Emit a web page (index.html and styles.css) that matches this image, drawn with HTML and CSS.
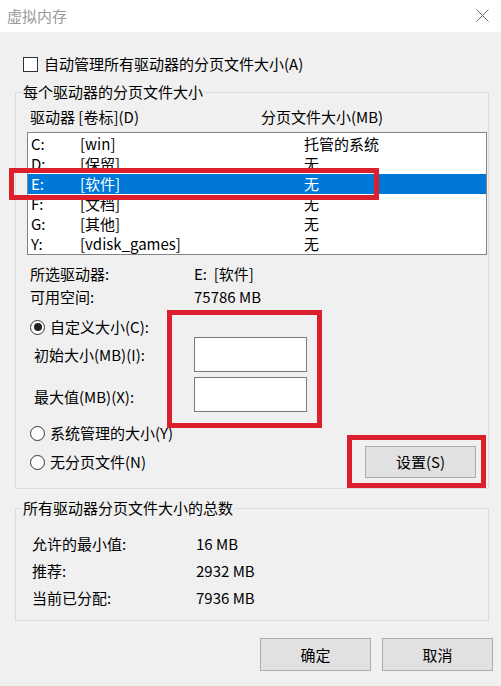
FILE: index.html
```html
<!DOCTYPE html>
<html lang="zh-CN">
<head>
<meta charset="utf-8">
<title>虚拟内存</title>
<link rel="stylesheet" href="styles.css">
</head>
<body>
<div class="window">
  <div class="titlebar">
    <span class="title">虚拟内存</span>
    <svg class="close" width="13" height="13" viewBox="0 0 13 13"><path d="M0.5 0.5 L12.5 12.5 M12.5 0.5 L0.5 12.5" stroke="#707070" stroke-width="1" fill="none"/></svg>
  </div>
  <div class="content">
    <div class="auto"><span class="checkbox"></span><span>自动管理所有驱动器的分页文件大小(A)</span></div>

    <fieldset class="group">
      <legend>每个驱动器的分页文件大小</legend>
      <div class="group-body drives">
        <div class="list-head"><span class="col-drive">驱动器 [卷标](D)</span><span>分页文件大小(MB)</span></div>
        <div class="list">
          <div class="row"><span class="c-letter">C:</span><span class="c-label">[win]</span><span>托管的系统</span></div>
          <div class="row"><span class="c-letter">D:</span><span class="c-label">[保留]</span><span>无</span></div>
          <div class="row selected"><span class="c-letter">E:</span><span class="c-label">[软件]</span><span>无</span></div>
          <div class="row"><span class="c-letter">F:</span><span class="c-label">[文档]</span><span>无</span></div>
          <div class="row"><span class="c-letter">G:</span><span class="c-label">[其他]</span><span>无</span></div>
          <div class="row"><span class="c-letter">Y:</span><span class="c-label">[vdisk_games]</span><span>无</span></div>
        </div>
        <div class="info">
          <div class="info-row"><span class="info-label">所选驱动器:</span><span>E:&nbsp;&nbsp;[软件]</span></div>
          <div class="info-row"><span class="info-label">可用空间:</span><span>75786 MB</span></div>
        </div>
        <div class="radio-row custom"><span class="radio checked"></span><span>自定义大小(C):</span></div>
        <div class="size-row"><span class="size-label">初始大小(MB)(I):</span><span class="input"></span></div>
        <div class="size-row second"><span class="size-label lower">最大值(MB)(X):</span><span class="input"></span></div>
        <div class="radio-row system"><span class="radio"></span><span>系统管理的大小(Y)</span></div>
        <div class="radio-row last"><span class="radio"></span><span>无分页文件(N)</span><span class="btn set-btn">设置(S)</span></div>
      </div>
    </fieldset>

    <fieldset class="group totals">
      <legend>所有驱动器分页文件大小的总数</legend>
      <div class="group-body totals-body">
        <div class="total-row"><span class="total-label">允许的最小值:</span><span>16 MB</span></div>
        <div class="total-row"><span class="total-label">推荐:</span><span>2932 MB</span></div>
        <div class="total-row"><span class="total-label">当前已分配:</span><span>7936 MB</span></div>
      </div>
    </fieldset>

    <div class="actions">
      <span class="btn">确定</span>
      <span class="btn">取消</span>
    </div>
  </div>

  <div class="mark mark-row"></div>
  <div class="mark mark-inputs"></div>
  <div class="mark mark-set"></div>
</div>
</body>
</html>
```

FILE: styles.css
```css
* { box-sizing: border-box; }

html, body {
  margin: 0;
  padding: 0;
  background: #f0f0f0;
}

.window {
  position: relative;
  width: 501px;
  height: 686px;
  font-family: "Noto Sans CJK SC", "Noto Sans", sans-serif;
  font-size: 15px;
  line-height: 20px;
  color: #000;
  background: #f0f0f0;
  overflow: hidden;
}

.titlebar {
  height: 32px;
  background: #fff;
  display: flex;
  align-items: center;
  justify-content: space-between;
  padding: 0 12px 0 7px;
}

.title {
  color: #9a9a9a;
  font-size: 15px;
}

.close {
  display: block;
  margin-top: -1px;
}

.content {
  padding: 0 12px 0 15px;
}

.auto {
  display: flex;
  align-items: center;
  height: 20px;
  margin-top: 22px;
  padding-left: 8px;
}

.checkbox {
  width: 15px;
  height: 15px;
  border: 1px solid #333;
  background: #fff;
  margin-right: 6px;
  flex: none;
}

.group {
  margin: 8px 0 0 0;
  padding: 0;
  border: 1px solid #dcdcdc;
  min-inline-size: 0;
}

.group legend {
  margin-left: 6px;
  padding: 0 1px;
  line-height: 20px;
}

.group-body.drives {
  padding: 0 1px 10px 11px;
}

.list-head {
  display: flex;
  margin-top: 5px;
  padding-left: 3px;
  height: 20px;
}

.col-drive {
  width: 231px;
}

.list {
  margin-top: 5px;
  height: 123px;
  border: 1px solid #828282;
  background: #fff;
  padding-top: 1px;
}

.row {
  display: flex;
  height: 20px;
  line-height: 20px;
  padding-left: 3px;
}

.row.selected {
  background: #0078d7;
  color: #fff;
}

.c-letter { width: 49px; }
.c-label { width: 224px; }

.info {
  margin-top: 7px;
  padding-left: 3px;
}

.info-row {
  display: flex;
  height: 23px;
  line-height: 23px;
}

.info-label { width: 164px; }

.radio-row {
  display: flex;
  align-items: center;
  height: 20px;
  padding-left: 3px;
}

.radio-row.custom { margin-top: 9px; }
.radio-row.system { margin-top: 11px; }
.radio-row.last {
  margin-top: 3px;
  height: 32px;
}

.radio {
  width: 15px;
  height: 15px;
  border: 1px solid #333;
  border-radius: 50%;
  background: #fff;
  margin-right: 5px;
  flex: none;
  display: flex;
  align-items: center;
  justify-content: center;
}

.radio.checked::after {
  content: "";
  width: 8px;
  height: 8px;
  border-radius: 50%;
  background: #222;
}

.size-row {
  display: flex;
  align-items: center;
  height: 35px;
  padding-left: 7px;
}

.size-row.second { margin-top: 5px; }

.size-label { width: 160px; }
.size-label.lower { padding-top: 5px; }

.input {
  width: 113px;
  height: 35px;
  border: 1px solid #7a7a7a;
  background: #fff;
}

.btn {
  display: flex;
  align-items: center;
  justify-content: center;
  width: 111px;
  height: 33px;
  border: 1px solid #adadad;
  background: #e1e1e1;
}

.set-btn {
  margin-left: auto;
  margin-right: 11px;
  height: 32px;
}

.group.totals { margin-top: 9px; }

.totals-body {
  padding: 12px 0 9px 16px;
}

.total-row {
  display: flex;
  height: 27px;
  line-height: 27px;
}

.total-label { width: 164px; }

.actions {
  display: flex;
  justify-content: flex-end;
  gap: 11px;
  margin-top: 17px;
  margin-right: -4px;
}

.mark {
  position: absolute;
  border: 5px solid #dc1f2c;
  pointer-events: none;
}

.mark-row {
  left: 9px;
  top: 168px;
  width: 370px;
  height: 32px;
}

.mark-inputs {
  left: 167px;
  top: 310px;
  width: 155px;
  height: 118px;
}

.mark-set {
  left: 347px;
  top: 435px;
  width: 139px;
  height: 53px;
}
```
